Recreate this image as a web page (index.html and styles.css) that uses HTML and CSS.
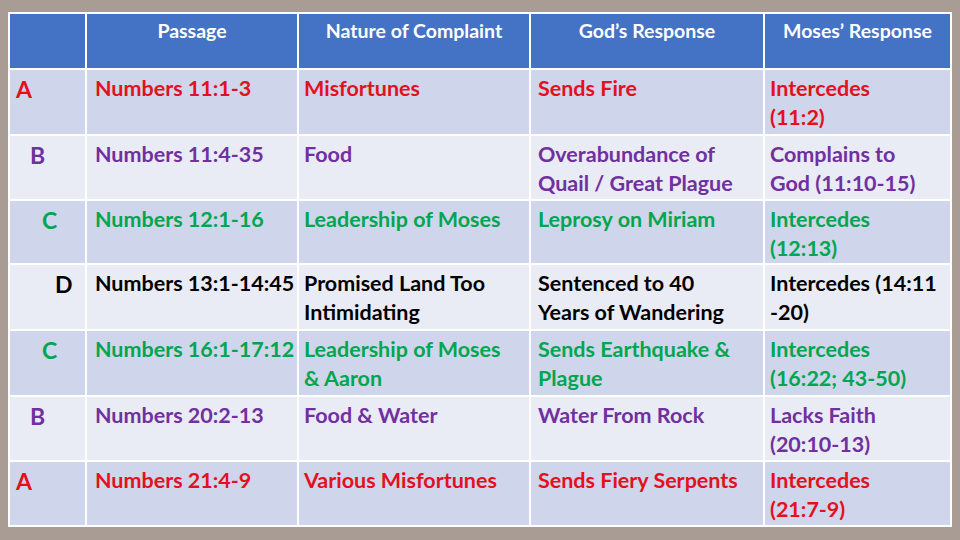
FILE: index.html
```html
<!DOCTYPE html>
<html>
<head>
<meta charset="utf-8">
<link rel="stylesheet" href="styles.css">
</head>
<body>
<div class="sheet">
  <div class="grid">
    <div class="row head">
      <div class="cell"></div>
      <div class="cell">Passage</div>
      <div class="cell">Nature of Complaint</div>
      <div class="cell">God’s Response</div>
      <div class="cell">Moses’ Response</div>
    </div>
    <div class="row dark red">
      <div class="cell key k1">A</div>
      <div class="cell">Numbers 11:1-3</div>
      <div class="cell">Misfortunes</div>
      <div class="cell">Sends Fire</div>
      <div class="cell">Intercedes<br>(11:2)</div>
    </div>
    <div class="row light purple">
      <div class="cell key k2">B</div>
      <div class="cell">Numbers 11:4-35</div>
      <div class="cell">Food</div>
      <div class="cell">Overabundance of<br>Quail / Great Plague</div>
      <div class="cell">Complains to<br>God (11:10-15)</div>
    </div>
    <div class="row dark green">
      <div class="cell key k3">C</div>
      <div class="cell">Numbers 12:1-16</div>
      <div class="cell">Leadership of Moses</div>
      <div class="cell">Leprosy on Miriam</div>
      <div class="cell">Intercedes<br>(12:13)</div>
    </div>
    <div class="row light black">
      <div class="cell key k4">D</div>
      <div class="cell">Numbers 13:1-14:45</div>
      <div class="cell">Promised Land Too<br>Intimidating</div>
      <div class="cell">Sentenced to 40<br>Years of Wandering</div>
      <div class="cell">Intercedes (14:11<br>-20)</div>
    </div>
    <div class="row dark green">
      <div class="cell key k3">C</div>
      <div class="cell">Numbers 16:1-17:12</div>
      <div class="cell">Leadership of Moses<br>&amp; Aaron</div>
      <div class="cell">Sends Earthquake &amp;<br>Plague</div>
      <div class="cell">Intercedes<br>(16:22; 43-50)</div>
    </div>
    <div class="row light purple">
      <div class="cell key k2">B</div>
      <div class="cell">Numbers 20:2-13</div>
      <div class="cell">Food &amp; Water</div>
      <div class="cell">Water From Rock</div>
      <div class="cell">Lacks Faith<br>(20:10-13)</div>
    </div>
    <div class="row dark red">
      <div class="cell key k1">A</div>
      <div class="cell">Numbers 21:4-9</div>
      <div class="cell">Various Misfortunes</div>
      <div class="cell">Sends Fiery Serpents</div>
      <div class="cell">Intercedes<br>(21:7-9)</div>
    </div>
  </div>
</div>
</body>
</html>
```

FILE: styles.css
```css
html, body {
  margin: 0;
  padding: 0;
}
body {
  width: 960px;
  height: 540px;
  background: #a99c95;
  overflow: hidden;
  font-family: Lato, "Open Sans", sans-serif;
  font-weight: 700;
}
.sheet {
  padding: 12px 8px 0 8px;
}
.grid {
  width: 944px;
  box-sizing: border-box;
  display: grid;
  grid-template-columns: 75px 210px 230px 232px 185px;
  grid-template-rows: 54px 64px 63px 62px 64px 64px 63px 63px;
  gap: 2px;
  padding: 2px;
  background: #ffffff;
}
.row {
  display: contents;
}
.cell {
  box-sizing: border-box;
  padding: 4px 4px 0 8px;
  font-size: 21.5px;
  line-height: 29px;
  white-space: nowrap;
}
.row > .cell:nth-child(3) { padding-left: 5px; }
.row > .cell:nth-child(4) { padding-left: 7px; }
.row > .cell:nth-child(5) { padding-left: 5px; }
.head .cell {
  background: #4472c4;
  color: #ffffff;
  text-align: center;
  font-size: 19.5px;
  padding: 2px 0 0 0;
}
.head > .cell:nth-child(n) { padding-left: 0; }
.dark .cell { background: #cfd5ea; }
.light .cell { background: #e9ebf5; }
.red { color: #e3101e; }
.purple { color: #7030a0; }
.green { color: #00a64f; }
.black { color: #000000; }
.key { font-size: 23px; padding-top: 5px; }
.k1 { padding-left: 6px; }
.k2 { padding-left: 20px; }
.k3 { padding-left: 32px; }
.k4 { padding-left: 45px; }
```
